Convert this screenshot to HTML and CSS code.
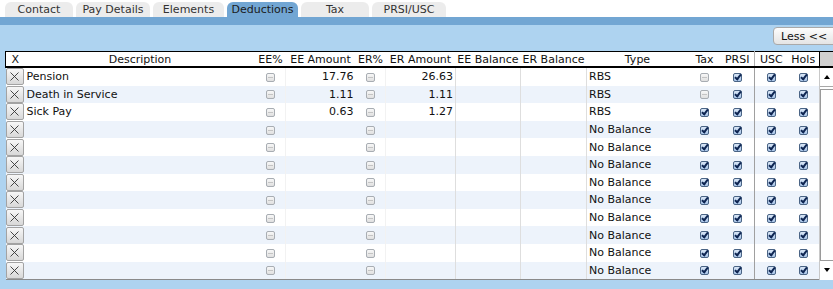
FILE: index.html
```html
<!DOCTYPE html>
<html lang="en">
<head>
  <meta charset="UTF-8" />
  <meta name="viewport" content="width=device-width, initial-scale=1.0"/>
  <title>Deductions</title>
  <link rel="stylesheet" href="styles.css">
</head>
<body>

  <nav class="tabs">
    <a class="tab w68">Contact</a>
    <a class="tab w74">Pay Details</a>
    <a class="tab w71">Elements</a>
    <a class="tab w71 active">Deductions</a>
    <a class="tab w68">Tax</a>
    <a class="tab w74">PRSI/USC</a>
  </nav>
  <div class="tab-bar"></div>

  <main class="panel">
    <div class="toolbar">
      <button class="less-btn">Less &lt;&lt;</button>
    </div>

    <table class="grid">
      <colgroup>
        <col class="c-del"><col class="c-desc"><col class="c-pct"><col class="c-amt"><col class="c-pct"><col class="c-amt">
        <col class="c-bal"><col class="c-bal2"><col class="c-type"><col class="c-tax"><col class="c-prsi"><col class="c-usc"><col class="c-hols"><col class="c-scroll">
      </colgroup>
      <thead>
        <tr>
          <th>X</th><th>Description</th><th>EE%</th><th>EE Amount</th><th>ER%</th><th>ER Amount</th>
          <th>EE Balance</th><th>ER Balance</th><th>Type</th><th>Tax</th><th class="sep">PRSI</th><th>USC</th><th>Hols</th><th class="scroll-head"></th>
        </tr>
      </thead>
      <tbody>
        <tr>
          <td><span class="del"><svg viewBox="0 0 9 9"><path d="M0.5 0.5L8.5 8.5M8.5 0.5L0.5 8.5"/></svg></span></td>
          <td class="txt">Pension</td><td class="mid"><span class="cb"></span></td><td class="num">17.76</td><td class="mid"><span class="cb"></span></td><td class="num">26.63</td>
          <td class="line"></td><td class="line"></td><td class="txt line">RBS</td>
          <td class="mid"><span class="cb"></span></td><td class="mid sep"><span class="cb on"></span></td><td class="mid"><span class="cb on"></span></td><td class="mid"><span class="cb on"></span></td>
          <td class="scroll" rowspan="12">
            <div class="sbar">
              <div class="sbtn"><span class="arrow up"></span></div>
              <div class="thumb"></div>
              <div class="sbtn"><span class="arrow down"></span></div>
            </div>
          </td>
        </tr>
        <tr>
          <td><span class="del"><svg viewBox="0 0 9 9"><path d="M0.5 0.5L8.5 8.5M8.5 0.5L0.5 8.5"/></svg></span></td>
          <td class="txt">Death in Service</td><td class="mid"><span class="cb"></span></td><td class="num">1.11</td><td class="mid"><span class="cb"></span></td><td class="num">1.11</td>
          <td class="line"></td><td class="line"></td><td class="txt line">RBS</td>
          <td class="mid"><span class="cb"></span></td><td class="mid sep"><span class="cb on"></span></td><td class="mid"><span class="cb on"></span></td><td class="mid"><span class="cb on"></span></td>
        </tr>
        <tr>
          <td><span class="del"><svg viewBox="0 0 9 9"><path d="M0.5 0.5L8.5 8.5M8.5 0.5L0.5 8.5"/></svg></span></td>
          <td class="txt">Sick Pay</td><td class="mid"><span class="cb"></span></td><td class="num">0.63</td><td class="mid"><span class="cb"></span></td><td class="num">1.27</td>
          <td class="line"></td><td class="line"></td><td class="txt line">RBS</td>
          <td class="mid"><span class="cb on"></span></td><td class="mid sep"><span class="cb on"></span></td><td class="mid"><span class="cb on"></span></td><td class="mid"><span class="cb on"></span></td>
        </tr>
        <tr>
          <td><span class="del"><svg viewBox="0 0 9 9"><path d="M0.5 0.5L8.5 8.5M8.5 0.5L0.5 8.5"/></svg></span></td>
          <td class="txt"></td><td class="mid"><span class="cb"></span></td><td class="num"></td><td class="mid"><span class="cb"></span></td><td class="num"></td>
          <td class="line"></td><td class="line"></td><td class="txt line">No Balance</td>
          <td class="mid"><span class="cb on"></span></td><td class="mid sep"><span class="cb on"></span></td><td class="mid"><span class="cb on"></span></td><td class="mid"><span class="cb on"></span></td>
        </tr>
        <tr>
          <td><span class="del"><svg viewBox="0 0 9 9"><path d="M0.5 0.5L8.5 8.5M8.5 0.5L0.5 8.5"/></svg></span></td>
          <td class="txt"></td><td class="mid"><span class="cb"></span></td><td class="num"></td><td class="mid"><span class="cb"></span></td><td class="num"></td>
          <td class="line"></td><td class="line"></td><td class="txt line">No Balance</td>
          <td class="mid"><span class="cb on"></span></td><td class="mid sep"><span class="cb on"></span></td><td class="mid"><span class="cb on"></span></td><td class="mid"><span class="cb on"></span></td>
        </tr>
        <tr>
          <td><span class="del"><svg viewBox="0 0 9 9"><path d="M0.5 0.5L8.5 8.5M8.5 0.5L0.5 8.5"/></svg></span></td>
          <td class="txt"></td><td class="mid"><span class="cb"></span></td><td class="num"></td><td class="mid"><span class="cb"></span></td><td class="num"></td>
          <td class="line"></td><td class="line"></td><td class="txt line">No Balance</td>
          <td class="mid"><span class="cb on"></span></td><td class="mid sep"><span class="cb on"></span></td><td class="mid"><span class="cb on"></span></td><td class="mid"><span class="cb on"></span></td>
        </tr>
        <tr>
          <td><span class="del"><svg viewBox="0 0 9 9"><path d="M0.5 0.5L8.5 8.5M8.5 0.5L0.5 8.5"/></svg></span></td>
          <td class="txt"></td><td class="mid"><span class="cb"></span></td><td class="num"></td><td class="mid"><span class="cb"></span></td><td class="num"></td>
          <td class="line"></td><td class="line"></td><td class="txt line">No Balance</td>
          <td class="mid"><span class="cb on"></span></td><td class="mid sep"><span class="cb on"></span></td><td class="mid"><span class="cb on"></span></td><td class="mid"><span class="cb on"></span></td>
        </tr>
        <tr>
          <td><span class="del"><svg viewBox="0 0 9 9"><path d="M0.5 0.5L8.5 8.5M8.5 0.5L0.5 8.5"/></svg></span></td>
          <td class="txt"></td><td class="mid"><span class="cb"></span></td><td class="num"></td><td class="mid"><span class="cb"></span></td><td class="num"></td>
          <td class="line"></td><td class="line"></td><td class="txt line">No Balance</td>
          <td class="mid"><span class="cb on"></span></td><td class="mid sep"><span class="cb on"></span></td><td class="mid"><span class="cb on"></span></td><td class="mid"><span class="cb on"></span></td>
        </tr>
        <tr>
          <td><span class="del"><svg viewBox="0 0 9 9"><path d="M0.5 0.5L8.5 8.5M8.5 0.5L0.5 8.5"/></svg></span></td>
          <td class="txt"></td><td class="mid"><span class="cb"></span></td><td class="num"></td><td class="mid"><span class="cb"></span></td><td class="num"></td>
          <td class="line"></td><td class="line"></td><td class="txt line">No Balance</td>
          <td class="mid"><span class="cb on"></span></td><td class="mid sep"><span class="cb on"></span></td><td class="mid"><span class="cb on"></span></td><td class="mid"><span class="cb on"></span></td>
        </tr>
        <tr>
          <td><span class="del"><svg viewBox="0 0 9 9"><path d="M0.5 0.5L8.5 8.5M8.5 0.5L0.5 8.5"/></svg></span></td>
          <td class="txt"></td><td class="mid"><span class="cb"></span></td><td class="num"></td><td class="mid"><span class="cb"></span></td><td class="num"></td>
          <td class="line"></td><td class="line"></td><td class="txt line">No Balance</td>
          <td class="mid"><span class="cb on"></span></td><td class="mid sep"><span class="cb on"></span></td><td class="mid"><span class="cb on"></span></td><td class="mid"><span class="cb on"></span></td>
        </tr>
        <tr>
          <td><span class="del"><svg viewBox="0 0 9 9"><path d="M0.5 0.5L8.5 8.5M8.5 0.5L0.5 8.5"/></svg></span></td>
          <td class="txt"></td><td class="mid"><span class="cb"></span></td><td class="num"></td><td class="mid"><span class="cb"></span></td><td class="num"></td>
          <td class="line"></td><td class="line"></td><td class="txt line">No Balance</td>
          <td class="mid"><span class="cb on"></span></td><td class="mid sep"><span class="cb on"></span></td><td class="mid"><span class="cb on"></span></td><td class="mid"><span class="cb on"></span></td>
        </tr>
        <tr>
          <td><span class="del"><svg viewBox="0 0 9 9"><path d="M0.5 0.5L8.5 8.5M8.5 0.5L0.5 8.5"/></svg></span></td>
          <td class="txt"></td><td class="mid"><span class="cb"></span></td><td class="num"></td><td class="mid"><span class="cb"></span></td><td class="num"></td>
          <td class="line"></td><td class="line"></td><td class="txt line">No Balance</td>
          <td class="mid"><span class="cb on"></span></td><td class="mid sep"><span class="cb on"></span></td><td class="mid"><span class="cb on"></span></td><td class="mid"><span class="cb on"></span></td>
        </tr>
      </tbody>
    </table>
  </main>

</body>
</html>
```

FILE: styles.css
```css
body {
  font-family: 'DejaVu Sans', Verdana, sans-serif;
  font-size: 11px;
  color: #111;
  margin: 0;
  padding: 0;
  width: 833px;
  height: 289px;
  overflow: hidden;
  background: #aed3f0;
}

/* Tabs */
.tabs {
  display: flex;
  align-items: flex-end;
  gap: 3px;
  height: 17px;
  padding-left: 5px;
  background: #fff;
}

.tab {
  height: 15px;
  line-height: 15px;
  text-align: center;
  color: #333;
  background: #ececec;
  border-radius: 6px 6px 0 0;
  cursor: pointer;
}

.tab.active {
  background: #72a6d3;
  color: #1a1a1a;
}

.w68 { width: 68px; }
.w71 { width: 71px; }
.w74 { width: 74px; }

.tab-bar {
  height: 8px;
  background: #72a6d3;
}

/* Panel */
.panel {
  padding-top: 2px;
}

.toolbar {
  display: flex;
  justify-content: flex-end;
  height: 18px;
  margin-bottom: 6px;
}

.less-btn {
  width: 64px;
  height: 18px;
  margin-right: -4px;
  padding: 0 0 0 7px;
  text-align: left;
  font-family: inherit;
  font-size: 11px;
  color: #111;
  border: 1px solid #a9a9a9;
  border-radius: 4px;
  background: linear-gradient(#fdfdfd, #e4e4e4);
}

/* Grid */
.grid {
  margin-left: 5px;
  width: 828px;
  table-layout: fixed;
  border-collapse: collapse;
}

.c-del { width: 19px; }
.c-desc { width: 231px; }
.c-pct { width: 30px; }
.c-amt { width: 70px; }
.c-bal { width: 65px; }
.c-bal2 { width: 66px; }
.c-type { width: 102px; }
.c-tax { width: 32px; }
.c-prsi { width: 34px; }
.c-usc { width: 33px; }
.c-hols { width: 32px; }
.c-scroll { width: 14px; }

.grid th {
  height: 14px;
  padding: 0;
  font-weight: normal;
  text-align: center;
  white-space: nowrap;
  background: #fff;
  border-top: 1px solid #000;
  border-bottom: 2px solid #000;
}

.grid th:first-child {
  border-left: 1px solid #000;
}

.grid th.scroll-head {
  background: #d0d0d0;
  border-left: 1px solid #000;
}

.grid th.sep {
  border-right: 1px solid #b0b0b0;
}

.grid td {
  height: 17.6px;
  padding: 0;
  white-space: nowrap;
  overflow: hidden;
}

.grid tbody tr:nth-child(odd) td { background: #fff; }
.grid tbody tr:nth-child(even) td { background: #edf3fb; }

.grid tbody tr:last-child td {
  border-bottom: 1px solid #8a8a8a;
}

.grid td.txt { padding-left: 2px; }
.grid td.num { padding-right: 2px; text-align: right; border-left: 1px solid #f2f2f2; }
.grid td.mid { text-align: center; }
.grid td.line { border-left: 1px solid #dedede; }
.grid td.sep { border-right: 1px solid #a0a0a0; }

/* Delete button */
.del {
  display: flex;
  align-items: center;
  justify-content: center;
  box-sizing: border-box;
  width: 18px;
  height: 17px;
  border: 1px solid #a3a3a3;
  border-radius: 2px;
  background: linear-gradient(#f7f7f7, #d8d8d8);
}

.del svg {
  width: 9px;
  height: 9px;
  stroke: #333;
  stroke-width: 0.9;
  fill: none;
}

/* Checkboxes */
.cb {
  display: inline-block;
  position: relative;
  box-sizing: border-box;
  width: 9px;
  height: 9px;
  vertical-align: middle;
  border: 1px solid #a8adb3;
  border-radius: 2px;
  background: linear-gradient(#f7f7f7, #e0e0e0);
}

.cb::after {
  content: "";
  position: absolute;
  left: 1px;
  right: 1px;
  top: 3px;
  height: 1px;
  background: #c4c4c4;
}

.cb.on {
  border-color: #4a6485;
  background: linear-gradient(#d9e6f6, #a9c5e8);
}

.cb.on::after {
  left: 2px;
  right: auto;
  top: -1px;
  width: 2px;
  height: 5px;
  background: none;
  border: solid #0e2552;
  border-width: 0 2px 2px 0;
  transform: rotate(38deg);
}

/* Scrollbar */
.grid td.scroll {
  padding: 0;
  vertical-align: top;
  background: #ececec;
  border-left: 1px solid #c8c8c8;
}

.sbar {
  display: flex;
  flex-direction: column;
  height: 211px;
}

.sbtn {
  display: flex;
  align-items: center;
  justify-content: center;
  height: 18px;
}

.sbtn:first-child {
  border-bottom: 1px solid #a8a8a8;
}

.thumb {
  flex: 1;
  margin: 2px 0 0;
  background: #fff;
  border: 1px solid #9a9a9a;
  border-right: none;
}

.arrow {
  width: 0;
  height: 0;
  border-left: 3.5px solid transparent;
  border-right: 3.5px solid transparent;
}

.arrow.up { border-bottom: 4px solid #000; }
.arrow.down { border-top: 4px solid #000; }
```
